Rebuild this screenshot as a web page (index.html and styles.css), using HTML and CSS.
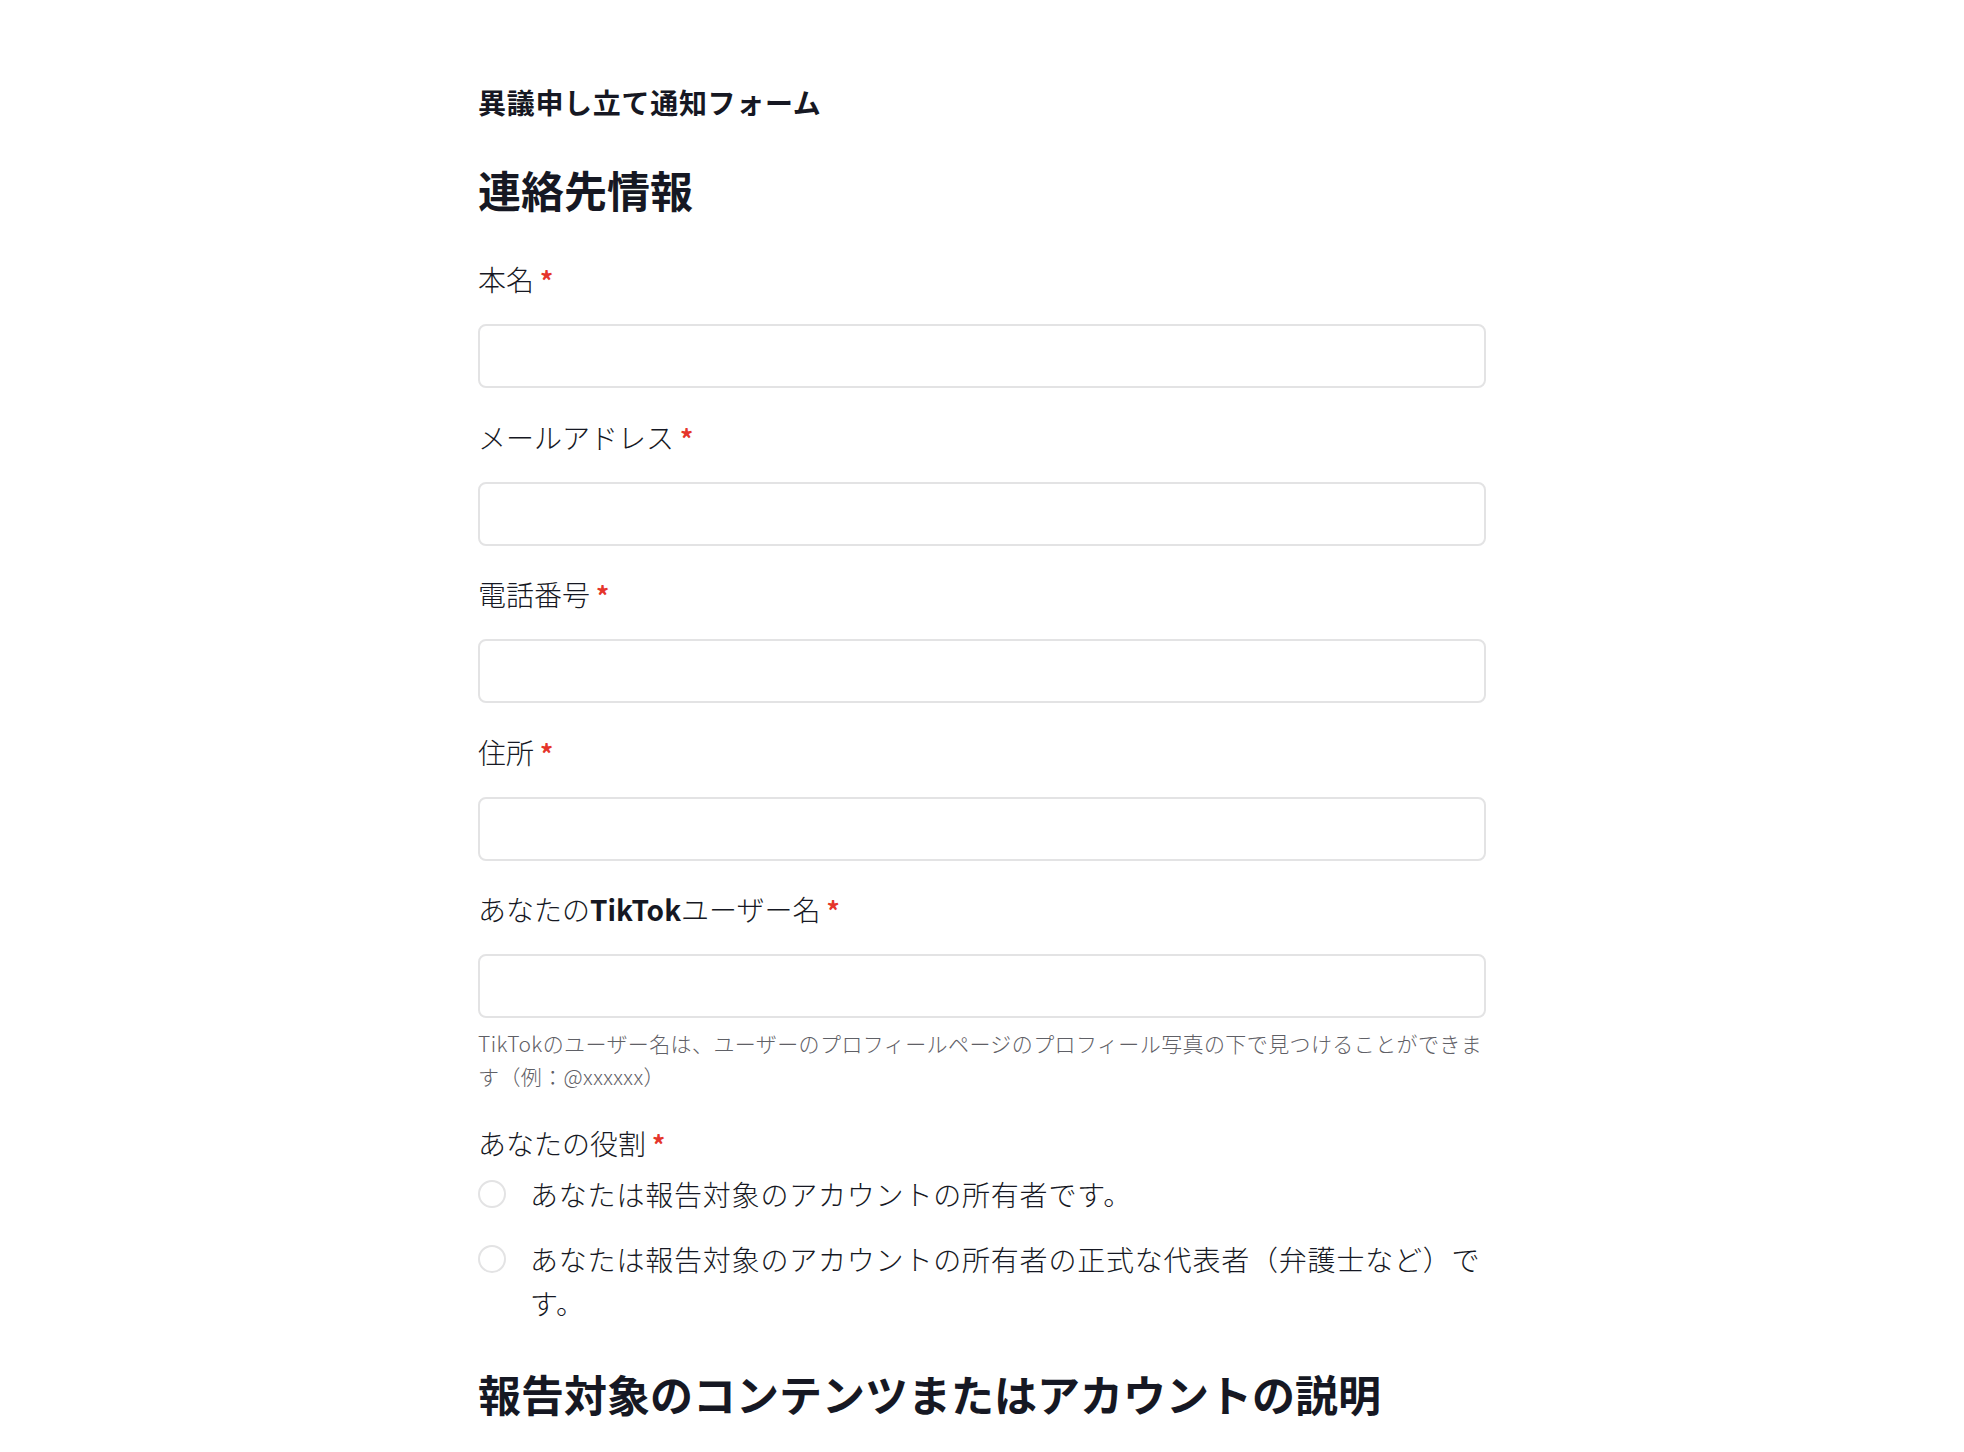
FILE: index.html
```html
<!DOCTYPE html>
<html lang="ja">
<head>
<meta charset="utf-8">
<title>異議申し立て通知フォーム</title>
<link rel="stylesheet" href="styles.css">
</head>
<body>
<main class="page">
  <div class="form-title">異議申し立て通知フォーム</div>
  <h2 class="section-heading">連絡先情報</h2>

  <div class="field">
    <label class="field-label">本名<span class="req">*</span></label>
    <input class="text-input" type="text">
  </div>
  <div class="field">
    <label class="field-label">メールアドレス<span class="req">*</span></label>
    <input class="text-input" type="text">
  </div>
  <div class="field">
    <label class="field-label">電話番号<span class="req">*</span></label>
    <input class="text-input" type="text">
  </div>
  <div class="field">
    <label class="field-label">住所<span class="req">*</span></label>
    <input class="text-input" type="text">
  </div>
  <div class="field field-help">
    <label class="field-label">あなたの<span class="brand">TikTok</span>ユーザー名<span class="req">*</span></label>
    <input class="text-input" type="text">
    <p class="help-text">TikTokのユーザー名は、ユーザーのプロフィールページのプロフィール写真の下で見つけることができます（例：@xxxxxx）</p>
  </div>

  <div class="field-group">
    <div class="field-label">あなたの役割<span class="req">*</span></div>
    <div class="radio-list">
      <label class="radio-item"><input class="radio" type="radio" name="role"><span class="radio-text">あなたは報告対象のアカウントの所有者です。</span></label>
      <label class="radio-item"><input class="radio" type="radio" name="role"><span class="radio-text">あなたは報告対象のアカウントの所有者の正式な代表者（弁護士など）です。</span></label>
    </div>
  </div>

  <h2 class="section-heading section-heading-2">報告対象のコンテンツまたはアカウントの説明</h2>
</main>
</body>
</html>
```

FILE: styles.css
```css
html, body {
  margin: 0;
  padding: 0;
  background: #ffffff;
}

body {
  font-family: "Noto Sans CJK JP", "Noto Sans", sans-serif;
  color: #161823;
}

.page {
  width: 1008px;
  margin: 0 auto;
  padding-top: 84px;
}

.form-title {
  font-size: 28px;
  line-height: 36px;
  font-weight: 700;
  letter-spacing: 0.7px;
}

.section-heading {
  margin: 41px 0 42px;
  font-size: 43px;
  line-height: 56px;
  font-weight: 700;
}

.field {
  display: flex;
  flex-direction: column;
  margin-bottom: 28.5px;
}

.field-label {
  font-size: 28px;
  line-height: 40px;
  font-weight: 300;
  margin-bottom: 25px;
  display: flex;
  align-items: center;
}

.brand {
  font-weight: 700;
}

.req {
  color: #e5352b;
  font-weight: 700;
  font-size: 26px;
  margin-left: 6px;
  position: relative;
  top: 1px;
}

.text-input {
  box-sizing: border-box;
  width: 100%;
  height: 64px;
  border: 2px solid #e3e3e4;
  border-radius: 8px;
  background: #fff;
  margin: 0;
  padding: 0 16px;
  font: inherit;
  outline: none;
}

.help-text {
  margin: 9px 0 0;
  font-size: 21px;
  line-height: 33px;
  letter-spacing: 0.4px;
  font-weight: 300;
  color: #5f6066;
}

.field-help {
  margin-bottom: 30px;
}

.field-group .field-label {
  margin-bottom: 9px;
}

.radio-list {
  display: flex;
  flex-direction: column;
  gap: 21px;
}

.radio-item {
  display: flex;
  align-items: flex-start;
  gap: 24px;
}

.radio {
  appearance: none;
  -webkit-appearance: none;
  flex: 0 0 auto;
  box-sizing: border-box;
  width: 28px;
  height: 28px;
  margin: 8px 0 0;
  border: 2px solid #e3e3e4;
  border-radius: 50%;
  background: #fff;
}

.radio-text {
  font-size: 28px;
  line-height: 44px;
  letter-spacing: 0.8px;
  font-weight: 300;
}

.section-heading-2 {
  margin-top: 40px;
}
```
